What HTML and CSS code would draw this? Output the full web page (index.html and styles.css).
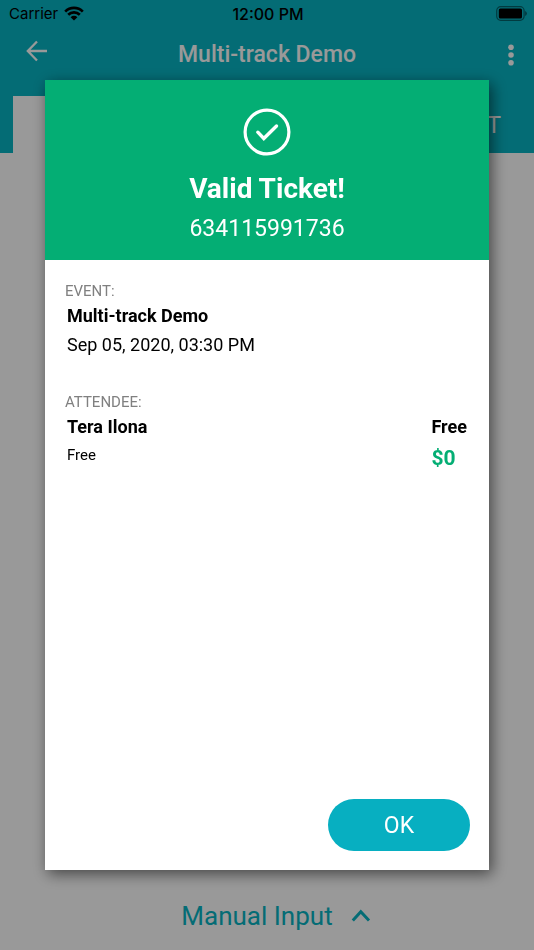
FILE: index.html
```html
<!DOCTYPE html>
<html lang="en">
<head>
<meta charset="utf-8">
<meta name="viewport" content="width=device-width, initial-scale=1">
<title>Multi-track Demo</title>
<link rel="stylesheet" href="styles.css">
</head>
<body>
<div class="app">
  <header class="top">
    <div class="status">
      <div class="carrier">
        <span>Carrier</span>
        <svg width="20" height="15" viewBox="0 0 20 15" aria-hidden="true">
          <path d="M1.2 5.6a12.4 12.4 0 0 1 17.6 0M4.2 8.8a8.2 8.2 0 0 1 11.6 0" fill="none" stroke="#000" stroke-width="2.7"/>
          <path d="M10 14.5 6.6 11.2a4.9 4.9 0 0 1 6.8 0z"/>
        </svg>
      </div>
      <time class="clock">12:00 PM</time>
      <svg class="battery" width="31" height="15" viewBox="0 0 31 15" aria-hidden="true">
        <rect x=".7" y=".7" width="27.4" height="13.6" rx="4" fill="none" stroke="#000" stroke-opacity=".45" stroke-width="1.2"/>
        <rect x="2.8" y="2.5" width="23.2" height="10" rx="1.6"/>
        <path d="M29.2 5v5q1.6-.8 1.6-2.5T29.2 5z" fill-opacity=".5"/>
      </svg>
    </div>
    <div class="bar">
      <button class="icon-button back" aria-label="Back">
        <svg width="22" height="22" viewBox="0 0 22 22"><path d="M11 1.5 1.8 11l9.2 9.5M2 11h19" fill="none" stroke="#fff" stroke-width="2.3"/></svg>
      </button>
      <h1 class="title">Multi-track Demo</h1>
      <button class="icon-button end" aria-label="More options">
        <svg width="6" height="22" viewBox="0 0 6 22" fill="#fff"><circle cx="3" cy="3.2" r="2.8"/><circle cx="3" cy="11" r="2.8"/><circle cx="3" cy="18.8" r="2.8"/></svg>
      </button>
    </div>
    <div class="tabs">
      <div class="tab active"></div>
      <div class="tab">T</div>
    </div>
  </header>
  <main class="scanner"></main>
  <footer class="foot">
    <button class="manual">
      <span>Manual Input</span>
      <svg width="20" height="14" viewBox="0 0 20 14" aria-hidden="true"><path d="m1.8 11.5 8-8.7 8.2 8.7" fill="none" stroke="currentColor" stroke-width="3"/></svg>
    </button>
  </footer>
</div>

<div class="overlay">
  <section class="dialog" role="dialog" aria-labelledby="result">
    <div class="result">
      <svg width="48" height="48" viewBox="0 0 48 48" fill="none" stroke="#fff" aria-hidden="true">
        <circle cx="24" cy="24" r="21.9" stroke-width="3.2"/>
        <path d="m14.8 24.2 6 6.3L33.5 18" stroke-width="3.4" stroke-linecap="round"/>
      </svg>
      <h2 class="valid" id="result">Valid Ticket!</h2>
      <p class="code">634115991736</p>
    </div>
    <div class="details">
      <h3 class="label">EVENT:</h3>
      <div class="group">
        <p class="strong">Multi-track Demo</p>
        <p class="date">Sep 05, 2020, 03:30 PM</p>
      </div>
      <h3 class="label">ATTENDEE:</h3>
      <div class="group attendee">
        <div>
          <p class="strong">Tera Ilona</p>
          <p class="ticket">Free</p>
        </div>
        <div>
          <p class="strong">Free</p>
          <p class="price">$0</p>
        </div>
      </div>
    </div>
    <div class="actions">
      <button class="ok">OK</button>
    </div>
  </section>
</div>
</body>
</html>
```
FILE: styles.css
```css
* {
  box-sizing: border-box;
}

body,
h1,
h2,
h3,
p {
  margin: 0;
}

body {
  font-family: Roboto, sans-serif;
  color: #000;
}

button {
  padding: 0;
  border: 0;
  background: none;
  font-family: inherit;
}

svg {
  display: block;
}

.app {
  display: flex;
  flex-direction: column;
  min-height: 100vh;
  background: #fff;
}

.top {
  background: #07b4c3;
}

.status,
.bar {
  display: grid;
  grid-template-columns: 1fr auto 1fr;
  align-items: center;
}

.status {
  height: 27px;
  padding: 0 7px 0 9px;
  font: 15px/26px Inter, sans-serif;
}

.carrier {
  display: flex;
  align-items: center;
  gap: 6px;
}

.clock {
  font-size: 16px;
  font-weight: 500;
}

.battery {
  justify-self: end;
}

.bar {
  height: 55px;
  padding: 0 20px;
}

.icon-button {
  justify-self: start;
}

.back {
  padding: 0 0 8px 6px;
}

.end {
  justify-self: end;
}

.title {
  font-size: 23px;
  font-weight: 500;
  line-height: 28px;
  color: #fff;
}

.tabs {
  display: flex;
  padding: 14px 13px 0;
}

.tab {
  flex: 1;
  height: 57px;
  padding-right: 20px;
  font-size: 24px;
  line-height: 58px;
  text-align: right;
  color: #fff;
}

.active {
  background: #fff;
}

.scanner {
  flex: 1;
}

.foot {
  display: flex;
  justify-content: center;
  padding: 16px 0;
}

.manual {
  display: flex;
  align-items: center;
  gap: 18px;
  padding-left: 18px;
  font-size: 26px;
  line-height: 36px;
  color: #07b4c3;
}

.overlay {
  position: fixed;
  inset: 0;
  display: flex;
  padding: 80px 45px;
  background: rgba(0, 0, 0, 0.4);
}

.dialog {
  flex: 1;
  display: flex;
  flex-direction: column;
  background: #fff;
  box-shadow: 3px 4px 14px rgba(0, 0, 0, 0.55);
}

.result {
  display: flex;
  flex-direction: column;
  align-items: center;
  padding: 28px 0 11px;
  background: #04ae74;
  color: #fff;
}

.valid {
  margin-top: 13px;
  font-size: 28px;
  font-weight: 700;
  line-height: 40px;
}

.code {
  font-size: 23px;
  line-height: 40px;
}

.details {
  flex: 1;
  padding: 20px;
}

.label {
  font-size: 15px;
  font-weight: 400;
  line-height: 22px;
  color: #808080;
}

.group {
  padding: 0 2px;
  margin-bottom: 31px;
}

.strong {
  font-size: 18px;
  font-weight: 700;
  line-height: 28px;
}

.date {
  font-size: 18px;
  line-height: 30px;
}

.attendee {
  display: flex;
  justify-content: space-between;
}

.ticket {
  font-size: 15px;
  line-height: 28px;
}

.price {
  font-size: 21px;
  font-weight: 700;
  line-height: 34px;
  color: #04ae74;
}

.actions {
  display: flex;
  justify-content: flex-end;
  padding: 19px;
}

.ok {
  width: 142px;
  height: 52px;
  border-radius: 26px;
  background: #07afc1;
  font-size: 23px;
  line-height: 54px;
  color: #fff;
}
```
